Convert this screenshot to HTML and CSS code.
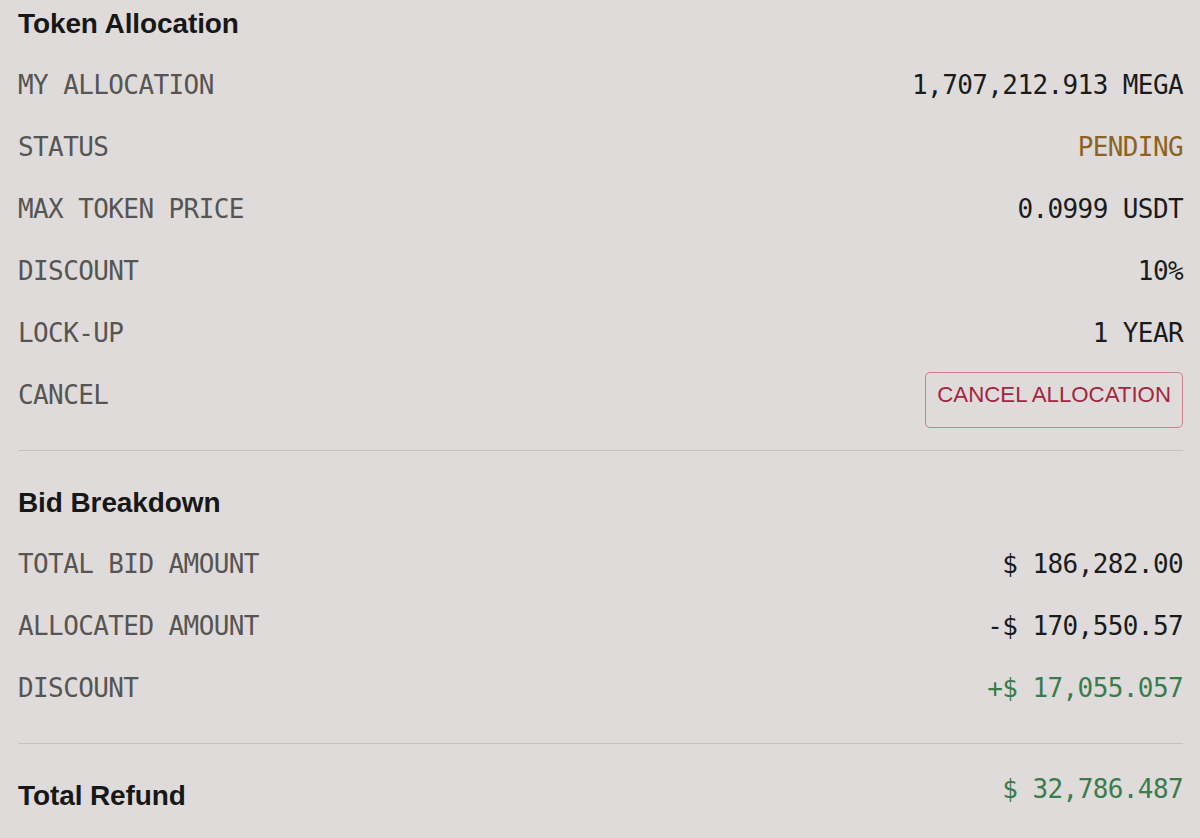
FILE: index.html
```html
<!DOCTYPE html>
<html lang="en">
<head>
<meta charset="utf-8">
<title>Token Allocation</title>
<link rel="stylesheet" href="styles.css">
</head>
<body>
<main class="panel">
  <section class="section section-first">
    <h2 class="heading">Token Allocation</h2>
    <div class="row"><span class="label">MY ALLOCATION</span><span class="value">1,707,212.913 MEGA</span></div>
    <div class="row"><span class="label">STATUS</span><span class="value value-pending">PENDING</span></div>
    <div class="row"><span class="label">MAX TOKEN PRICE</span><span class="value">0.0999 USDT</span></div>
    <div class="row"><span class="label">DISCOUNT</span><span class="value">10%</span></div>
    <div class="row"><span class="label">LOCK-UP</span><span class="value">1 YEAR</span></div>
    <div class="row"><span class="label">CANCEL</span><button class="cancel-btn" type="button">CANCEL ALLOCATION</button></div>
  </section>
  <section class="section">
    <h2 class="heading">Bid Breakdown</h2>
    <div class="row"><span class="label">TOTAL BID AMOUNT</span><span class="value">$ 186,282.00</span></div>
    <div class="row"><span class="label">ALLOCATED AMOUNT</span><span class="value">-$ 170,550.57</span></div>
    <div class="row"><span class="label">DISCOUNT</span><span class="value value-positive">+$ 17,055.057</span></div>
  </section>
  <section class="section section-last">
    <div class="total-row">
      <h2 class="heading">Total Refund</h2>
      <span class="value value-positive total-value">$ 32,786.487</span>
    </div>
  </section>
</main>
</body>
</html>
```

FILE: styles.css
```css
html, body {
  margin: 0;
  padding: 0;
  background: #dedbda;
}

body {
  width: 1200px;
  height: 838px;
  overflow: hidden;
}

.panel {
  padding: 0 17px 0 18px;
}

.section {
  padding: 28px 0 24px;
  border-bottom: 1px solid #c6c2c1;
}

.section-first {
  padding-top: 0;
}

.section-last {
  border-bottom: none;
}

.heading {
  margin: 0 0 8px;
  padding-top: 2px;
  font-family: "Liberation Sans", Arial, sans-serif;
  font-weight: 700;
  font-size: 28px;
  line-height: 44px;
  color: #171717;
  letter-spacing: -0.1px;
}

.row {
  display: flex;
  justify-content: space-between;
  align-items: center;
  height: 62px;
}

.label,
.value {
  font-family: "DejaVu Sans Mono", "Liberation Mono", monospace;
  font-size: 26px;
  letter-spacing: -0.6px;
  line-height: 34px;
  white-space: pre;
}

.label {
  color: #575553;
}

.value {
  color: #1b1b1b;
}

.value-pending {
  color: #8d6322;
}

.value-positive {
  color: #3b7c4b;
}

.cancel-btn {
  align-self: flex-start;
  margin-top: 8px;
  height: 56px;
  padding: 8px 11px 18px 11px;
  border: 1px solid #c9808c;
  border-radius: 5px;
  background: transparent;
  font-family: "Liberation Sans", Arial, sans-serif;
  font-size: 22.25px;
  line-height: 28px;
  color: #a3263f;
  box-sizing: border-box;
}

.total-row {
  display: flex;
  justify-content: space-between;
  align-items: flex-start;
}

.total-row .heading {
  margin: 0;
}

.total-value {
  line-height: 34px;
}
```
